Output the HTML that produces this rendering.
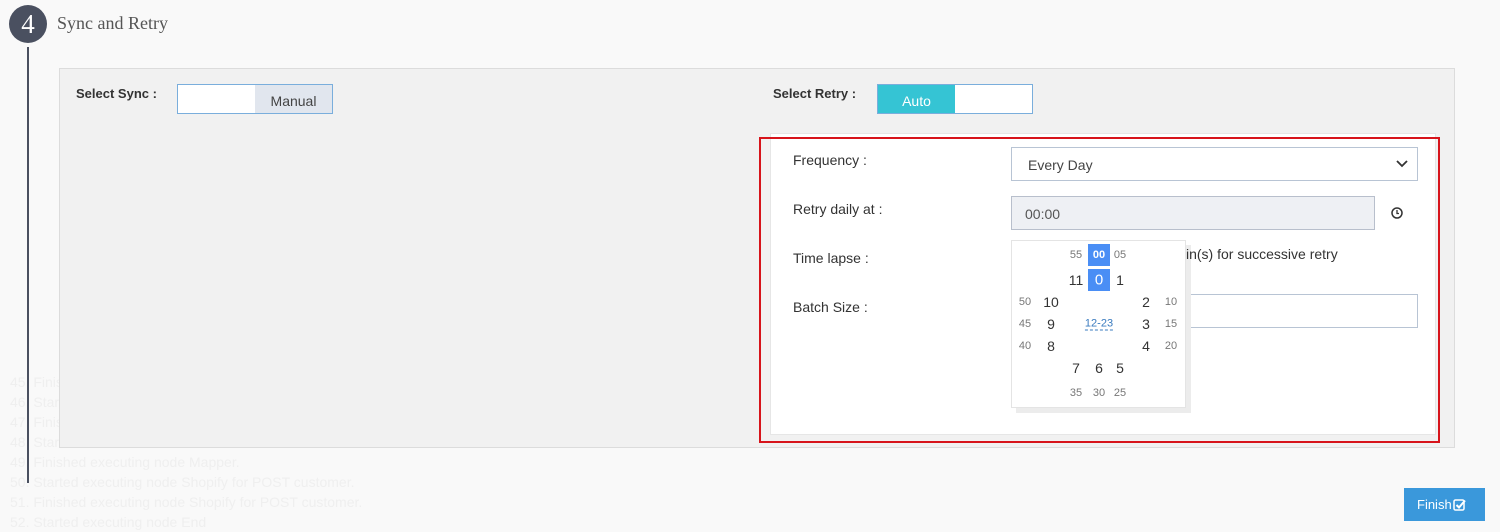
<!DOCTYPE html>
<html><head><meta charset="utf-8"><style>
*{margin:0;padding:0;box-sizing:border-box}
body{width:1500px;height:532px;background:#f9f9f9;font-family:"Liberation Sans",sans-serif;position:relative;overflow:hidden}
.a{position:absolute}
.c{position:absolute;transform:translate(-50%,-50%);white-space:nowrap}
.m{font-size:11px;color:#777}
.h{font-size:14px;color:#333}
.bg{color:#efefef;font-size:14px}
</style></head><body>
<div class="a bg" style="left:10px;top:372px;line-height:20px">45. Finished<br>46. Started<br>47. Finished<br>48. Started<br>49. Finished executing node Mapper.<br>50. Started executing node Shopify for POST customer.<br>51. Finished executing node Shopify for POST customer.<br>52. Started executing node End</div>
<div class="a" style="left:9px;top:5px;width:38px;height:38px;border-radius:50%;background:#4a5060;color:#fff;font-size:27px;text-align:center;line-height:38px;font-family:'Liberation Serif',serif">4</div>
<div class="a" style="left:27px;top:47px;width:2px;height:436px;background:#4a5060"></div>
<div class="a" style="left:57px;top:13px;font-family:'Liberation Serif',serif;font-size:18px;color:#555">Sync and Retry</div>
<div class="a" style="left:59px;top:68px;width:1396px;height:380px;background:#f1f1f1;border:1px solid #dcdcdc"></div>
<div class="a" style="left:76px;top:86px;font-size:13px;font-weight:bold;color:#333">Select Sync :</div>
<div class="a" style="left:177px;top:84px;width:156px;height:30px;border:1px solid #7aaedc;background:#fff"><div class="a" style="left:77px;top:0;width:77px;height:28px;background:#e1e6ee;font-size:14px;color:#444;text-align:center;line-height:32px">Manual</div></div>
<div class="a" style="left:773px;top:86px;font-size:13px;font-weight:bold;color:#333">Select Retry :</div>
<div class="a" style="left:877px;top:84px;width:156px;height:30px;border:1px solid #7aaedc;background:#fff"><div class="a" style="left:0;top:0;width:77px;height:28px;background:#35c4d4;font-size:14px;color:#fff;text-align:center;line-height:32px">Auto</div></div>
<div class="a" style="left:770px;top:133px;width:666px;height:302px;background:#fff;border:1px solid #e6e6e6"></div>
<div class="a" style="left:759px;top:137px;width:681px;height:306px;border:2px solid #d7141b"></div>
<div class="a h" style="left:793px;top:152px">Frequency :</div>
<div class="a" style="left:1011px;top:147px;width:407px;height:34px;border:1px solid #b8c4d4;background:#fff;font-size:14px;color:#444;padding:9px 16px">Every Day</div>
<svg class="a" style="left:1395px;top:158px" width="14" height="12"><path d="M2 3 L7 8 L12 3" stroke="#333" stroke-width="1.8" fill="none"/></svg>
<div class="a h" style="left:793px;top:201px">Retry daily at :</div>
<div class="a" style="left:1011px;top:196px;width:364px;height:34px;border:1px solid #b8bfcc;background:#eef0f4;font-size:14px;color:#555;padding:9px 13px">00:00</div>
<svg class="a" style="left:1390px;top:206px" width="14" height="14"><circle cx="7" cy="7" r="5" stroke="#333" stroke-width="1.5" fill="none"/><path d="M7 4V7.5H9" stroke="#333" stroke-width="1.3" fill="none"/></svg>
<div class="a h" style="left:793px;top:250px">Time lapse :</div>
<div class="a h" style="left:793px;top:299px">Batch Size :</div>
<div class="a" style="left:1011px;top:294px;width:407px;height:34px;border:1px solid #b8c4d4;background:#fff"></div>
<div class="a" style="left:1016px;top:245px;width:175px;height:168px;background:#ececec"></div>
<div class="a" style="left:1011px;top:240px;width:175px;height:168px;background:#fff;border:1px solid #e4e4e4"></div>
<div class="a h" style="left:1186px;top:246px">in(s) for successive retry</div>
<div class="a" style="left:1088px;top:244px;width:22px;height:22px;background:#4a8ef5"></div>
<div class="a" style="left:1088px;top:269px;width:22px;height:22px;background:#4a8ef5"></div>
<div class="c m" style="left:1076px;top:255px">55</div><div class="c m" style="left:1099px;top:255px;color:#fff;font-weight:bold">00</div><div class="c m" style="left:1120px;top:255px">05</div>
<div class="c h" style="left:1076px;top:280px">11</div><div class="c h" style="left:1099px;top:280px;color:#fff;font-size:15px">0</div><div class="c h" style="left:1120px;top:280px">1</div>
<div class="c m" style="left:1025px;top:302px">50</div><div class="c h" style="left:1051px;top:302px">10</div><div class="c h" style="left:1146px;top:302px">2</div><div class="c m" style="left:1171px;top:302px">10</div>
<div class="c m" style="left:1025px;top:324px">45</div><div class="c h" style="left:1051px;top:324px">9</div><div class="c" style="left:1099px;top:324px;font-size:11px;color:#3a7bbf;border-bottom:1px dashed #3a7bbf">12-23</div><div class="c h" style="left:1146px;top:324px">3</div><div class="c m" style="left:1171px;top:324px">15</div>
<div class="c m" style="left:1025px;top:346px">40</div><div class="c h" style="left:1051px;top:346px">8</div><div class="c h" style="left:1146px;top:346px">4</div><div class="c m" style="left:1171px;top:346px">20</div>
<div class="c h" style="left:1076px;top:368px">7</div><div class="c h" style="left:1099px;top:368px">6</div><div class="c h" style="left:1120px;top:368px">5</div>
<div class="c m" style="left:1076px;top:393px">35</div><div class="c m" style="left:1099px;top:393px">30</div><div class="c m" style="left:1120px;top:393px">25</div>
<div class="a" style="left:1404px;top:488px;width:81px;height:33px;background:#3a98db;color:#fff;font-size:13px;line-height:33px;padding-left:13px">Finish<svg style="vertical-align:-2px;margin-left:1px" width="13" height="13"><rect x="1" y="2" width="10" height="10" rx="1.5" stroke="#fff" stroke-width="1.5" fill="none"/><path d="M3.5 7 L6 9.5 L12 2.5" stroke="#fff" stroke-width="2" fill="none"/></svg></div>
</body></html>
